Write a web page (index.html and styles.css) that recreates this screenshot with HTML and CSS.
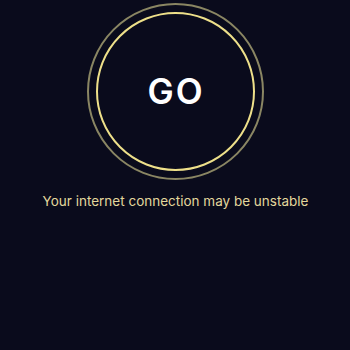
FILE: index.html
```html
<!DOCTYPE html>
<html>
<head>
<meta charset="utf-8">
<link rel="stylesheet" href="styles.css">
</head>
<body>
<main class="screen">
  <div class="ring-outer">
    <div class="ring-inner">
      <span class="go">GO</span>
    </div>
  </div>
  <p class="status">Your internet connection may be unstable</p>
</main>
</body>
</html>
```
FILE: styles.css
```css
html, body {
  margin: 0;
  padding: 0;
  background: #0a0b1c;
  width: 350px;
  height: 350px;
  overflow: hidden;
}
.screen {
  display: flex;
  flex-direction: column;
  align-items: center;
  padding-top: 3px;
  font-family: "Inter", "Noto Sans", sans-serif;
}
.ring-outer {
  width: 177px;
  height: 177px;
  box-sizing: border-box;
  border: 2px solid #8a8663;
  border-radius: 50%;
  display: flex;
  align-items: center;
  justify-content: center;
}
.ring-inner {
  width: 159px;
  height: 159px;
  box-sizing: border-box;
  border: 2px solid #eee08a;
  border-radius: 50%;
  display: flex;
  align-items: center;
  justify-content: center;
}
.go {
  color: #ffffff;
  font-size: 35px;
  font-weight: 600;
  letter-spacing: 2px;
  padding-left: 2px;
  line-height: 1;
}
.status {
  margin: 12px 0 0;
  padding-left: 1px;
  color: #e3d79c;
  font-size: 13.5px;
  line-height: 18px;
  letter-spacing: 0;
}
```
